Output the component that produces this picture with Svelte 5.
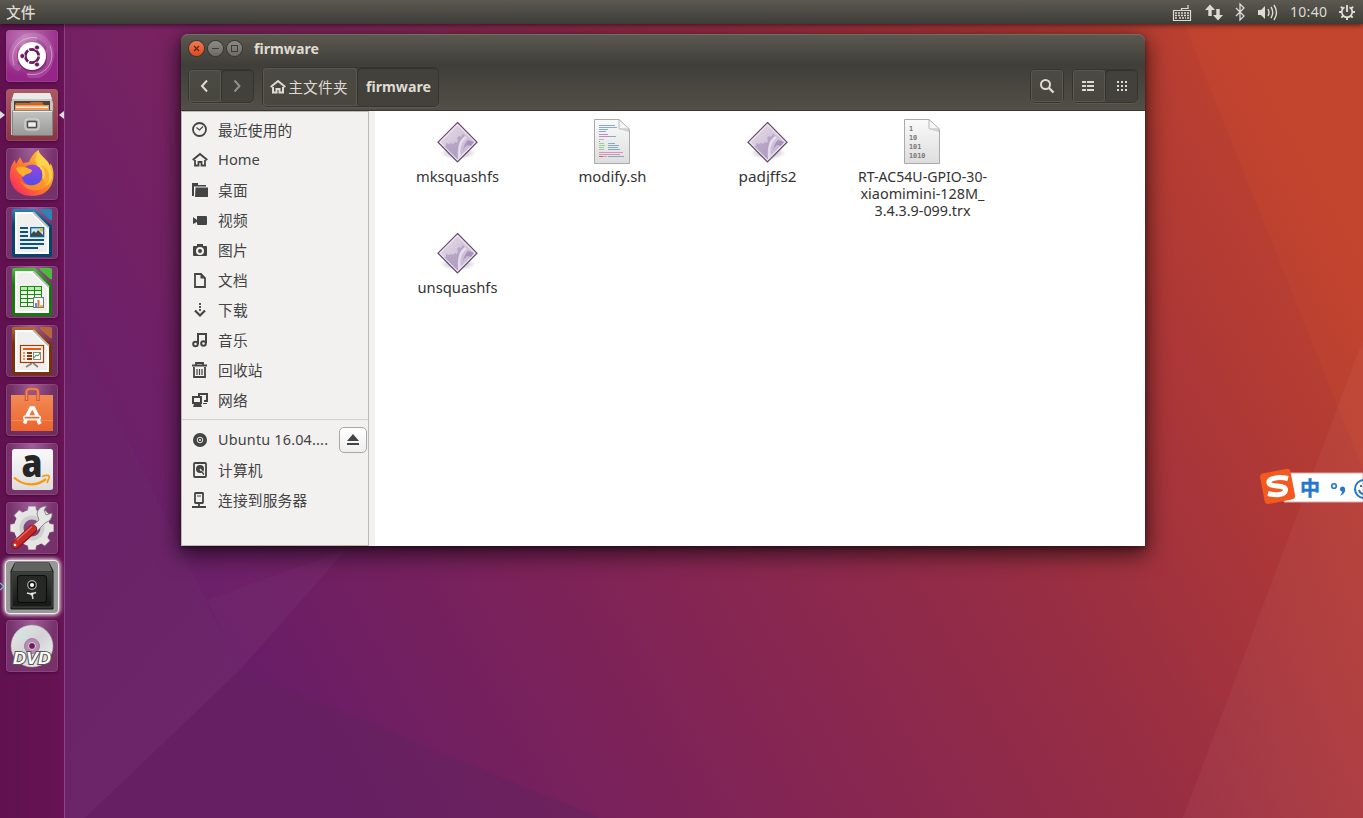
<script>
  const places = [
    ['recent', '最近使用的'], ['home', 'Home'], ['folder', '桌面'], ['video', '视频'],
    ['camera', '图片'], ['doc', '文档'], ['download', '下载'], ['music', '音乐'],
    ['trash', '回收站'], ['network', '网络']
  ];
  const devices = [['disc', 'Ubuntu 16.04....'], ['disk', '计算机'], ['server', '连接到服务器']];
  const files = [
    ['exec', ['mksquashfs'], [83]], ['script', ['modify.sh'], [68]], ['exec', ['padjffs2'], [58]],
    ['binary', ['RT-AC54U-GPIO-30-', 'xiaomimini-128M_', '3.4.3.9-099.trx'], [129, 124, 96]],
    ['exec', ['unsquashfs'], [80]]
  ];
  const apps = ['dash', 'files', 'firefox', 'writer', 'calc', 'impress', 'software', 'amazon', 'settings', 'safe', 'dvd'];
  const teeth = [0, 45, 90, 135, 180, 225, 270, 315];
  const office = {
    writer: ['#2c83b4', '#06446f'], calc: ['#4cbb3a', '#157a0b'], impress: ['#b5673a', '#7d2f06']
  };
  const codeLines = [
    [5, 6, 16, '#7ba3be'], [5, 8, 18, '#7ba3be'], [5, 10, 9, '#7ba3be'], [5, 12, 7, '#7ba3be'],
    [5, 15, 9, '#c17bc5'], [5, 17, 9, '#c77bbb'], [14, 17, 8, '#7ba3be'], [5, 20, 5, '#94c990'], [5, 22, 1, '#888'],
    [5, 24, 5, '#94c990'], [14, 24, 7, '#7ba3be'], [5, 26, 6, '#94c990'], [14, 26, 11, '#7ba3be'],
    [5, 28, 5, '#94c990'], [14, 28, 10, '#7ba3be'], [5, 30, 5, '#94c990'], [14, 30, 12, '#7ba3be'],
    [5, 33, 24, '#d987b8'], [5, 35, 21, '#d987b8'], [5, 37, 4, '#d65060'], [9, 37, 4, '#aaa'], [14, 37, 16, '#7ba3be']
  ];
</script>

{#snippet appIcon(n)}
  <svg width="52" height="52" viewBox="0 0 52 52">
    {#if n === 'dash'}
      <g fill="none" stroke="#fff" stroke-linecap="round">
        <path d="M9 31C4 15 15 5 29 8M43 21C48 35 38 47 24 45M19 7C36 1 48 15 44 31M12 38C0 31 7 14 17 12" stroke-width="6" opacity=".14" />
        <path d="M8 35C2 17 17 5 31 8M44 16C51 33 38 48 21 44" stroke-width="1" opacity=".4" />
      </g>
      <circle cx="26" cy="26.8" r="14.5" fill="#4d0b41" opacity=".45" />
      <circle cx="26" cy="26" r="14" fill="#fff" />
      <circle cx="26" cy="26" r="6.7" fill="none" stroke="#6b1c5c" stroke-width="2.8" />
      <path d="M26 26L34.5 26M26 26L21.5 18M26 26L21.5 34" stroke="#fff" stroke-width="1.2" />
      <circle cx="26" cy="26" r="4.8" fill="#fff" />
      {#each [[31, 17.5], [16.3, 26], [31, 34.5]] as p}
        <circle cx={p[0]} cy={p[1]} r="2.5" fill="#6b1c5c" stroke="#fff" stroke-width=".8" />
      {/each}
    {:else if n === 'files'}
      <path d="M8 4H44L47 14V46H5V14Z" fill="#c7c6c4" />
      <path d="M8 4H44L46 10H6Z" fill="#e9e9e8" />
      <path d="M8 12H44V23H8Z" fill="#48433f" />
      <path d="M9 16L10 14H24L25 13H36L38 16H43V22H9Z" fill="#c7652b" />
      <path d="M9 16H43V22H9Z" fill="#ee9a59" /><path d="M10 17.500H42V19H10Z" fill="#fff0dd" />
      <rect x="6.500" y="21.500" width="40" height="25" rx="1" fill="url(#silver)" stroke="#777" stroke-width=".8" />
      <path d="M7 22.500H46" stroke="#eee" />
      <rect x="19" y="30" width="14" height="11" rx="2.500" fill="#b4b4b4" stroke="#dedede" />
      <rect x="21.500" y="32.500" width="9" height="6" rx="1" fill="#eee" stroke="#4c4c4c" stroke-width="1.400" />
    {:else if n === 'firefox'}
      <path d="M26 48C11 48 2.500 37 4 24C4.600 18 7 14 9 12L10 16L14 9L17 15L23 14C26 7 29 4 32.500 2C33 7 38 9 42 14C43 15.500 43.500 17 44 18L44.500 15C51 26 48 48 26 48Z" fill="url(#fox)" />
      <path d="M29 12C31 7 31 5 32.500 2C33 8 45 12 46 26C46.500 31 44 36 40 38Z" fill="#ffd94d" opacity=".85" />
      <circle cx="26" cy="27" r="10.500" fill="url(#globe)" />
      <path d="M35 17C45 20 46 34 38 40C30 45 18 42 14 33C18 38 29 39 36 33C41 28 39 21 35 17Z" fill="#ff9a2b" opacity=".7" />
      <path d="M10 20C15 17 22 20 26 22C26 26 20 25 17 29C15 27 11 24 10 20Z" fill="#ffb12a" />
    {:else if office[n]}
      <path d="M8 2H29L46 19V48Q46 50 44 50H8Q6 50 6 48V4Q6 2 8 2Z" fill="url(#g-{n})" />
      <path d="M34 2H44Q46 2 46 4V13Q44 14 43 12L34 4Q33 2 34 2Z" fill={office[n][0]} />
      <path d="M9 5H27L43 21V47H9Z" fill="#fff" /><path d="M11 7H26L41 22V45H11Z" fill="#efefee" />
      <path d="M27 5L43 21" stroke="#bbb" stroke-width="2" />
      {#if n === 'writer'}
        <path d="M14 21H22M14 25H22M14 29H22M14 33H38M14 37H38M14 41H32" stroke="#08538c" stroke-width="1.800" />
        <rect x="24.700" y="20.700" width="13" height="9" fill="#cbe5f4" stroke="#08538c" stroke-width="1.200" />
        <path d="M25 29V27L28 24L30 26L32 23L37 28V29Z" fill="#3b4b43" /><circle cx="35.500" cy="23" r="1.800" fill="#e9bd28" />
      {:else if n === 'calc'}
        <path d="M14 20H36V41H14Z" fill="#16900b" />
        {#each [21, 25, 29, 33, 37] as y}{#each [15, 22, 29] as x}<rect {x} {y} width="6" height="3" fill={y === 21 ? '#bce8b1' : '#f5fff2'} />{/each}{/each}
        <rect x="27.500" y="31.500" width="10" height="10" fill="#fff" stroke="#777" />
        <path d="M29 37H31V41H29Z" fill="#3d99db" /><path d="M31.500 34H33.500V41H31.500Z" fill="#e66c32" /><path d="M34 39H37V41H34Z" fill="#f0ba28" />
      {:else}
        <path d="M25 38V39L20 42M27 38L32 42" stroke="#888" stroke-width="1.800" />
        <rect x="14.500" y="20.500" width="23" height="17" fill="#fff4eb" stroke="#a33e0b" stroke-width="1.200" />
        <path d="M17 24H35" stroke="#e15b1d" stroke-width="2" />
        <path d="M17 28H19M17 31H19M17 34H19" stroke="#ed935d" stroke-width="2" /><path d="M21 28H26M21 31H26M21 34H26" stroke="#8c380e" stroke-width="2" />
        <rect x="27.500" y="27.500" width="7" height="7" fill="#fff" stroke="#888" /><path d="M28 33L30 30L32 31L34 28" fill="none" stroke="#2c9328" />
      {/if}
    {:else if n === 'software'}
      <path d="M5 11H47V47H5Z" fill="url(#orange)" /><path d="M5 36H47V37H5Z" fill="#f78a50" />
      <path d="M20.500 17V8Q20.500 5 24 5H29Q32 5 32 8V17" fill="none" stroke="#cf572e" stroke-width="3.600" /><path d="M20.500 16V8Q20.500 5 24 5H29Q32 5 32 8V16" fill="none" stroke="#ef8b61" stroke-width="1.600" />
      <path d="M21 32L25 24H27.500L31.500 32M20 36L18.500 39.500M32 36L34 40" fill="none" stroke="#fff" stroke-width="3.600" />
      <rect x="17.800" y="32" width="16.500" height="3.400" rx="1.700" fill="#ec6932" stroke="#fff" stroke-width="1.600" />
    {:else if n === 'amazon'}
      <rect x="6" y="6" width="41" height="41" rx="2.500" fill="url(#paper)" />
      <text x="15.500" y="34" font-family="Open Sans" font-weight="800" font-size="38" textLength="21" lengthAdjust="spacingAndGlyphs" fill="#252525">a</text>
      <path d="M8 34.500C17 43 31 43.500 40 36" fill="none" stroke="#f79a16" stroke-width="2.300" /><path d="M36 33.500C41 31.500 44 32 43 35L41 40" fill="none" stroke="#f79a16" stroke-width="1.800" />
    {:else if n === 'settings'}
      <g transform="translate(26 26)" fill="#e8e8e7">
        {#each teeth as a}<path d="M-4.500 -16L-3.500 -21.500H3.500L4.500 -16Z" transform="rotate({a})" stroke="#bbb" stroke-width=".5" />{/each}
        <circle r="14" fill="none" stroke="#e5e5e4" stroke-width="8" /><circle r="10.500" fill="none" stroke="#cecece" stroke-width="4" />
      </g>
      <path d="M25 25L33 18L31 12Q32 4 41 4L38 8L40 13L46 11Q47 18 39 21L31 29Z" fill="#e6e6e5" stroke="#777" stroke-width=".8" />
      <path d="M9.500 43L27 27" stroke="#8d1515" stroke-width="8.500" stroke-linecap="round" /><path d="M9.500 42.500L27 26.500" stroke="#c62c29" stroke-width="6.500" stroke-linecap="round" /><path d="M11 38L26 24.500" stroke="#e36c65" stroke-width="1.300" /><circle cx="9" cy="43" r="1.300" fill="#fff" />
    {:else if n === 'safe'}
      <path d="M9 2H43L47 10V48H5V10Z" fill="#282b29" stroke="#151515" /><path d="M9 2H43L46 10H6Z" fill="#62645f" />
      <path d="M6 11H46V46H6Z" fill="url(#safe)" stroke="#444744" />
      <rect x="11.500" y="14.500" width="29" height="27" rx="3" fill="#252926" stroke="#0c0e0c" stroke-width="1.200" />
      <circle cx="26" cy="24" r="4.300" fill="#151515" stroke="#a7a7a4" stroke-width="1.200" /><circle cx="26" cy="24" r="2" fill="#fff" />
      <path d="M21 32L25 33L30 31.500M26 33L27 38" fill="none" stroke="#deded8" stroke-width="1.400" /><circle cx="26" cy="33" r="1.500" fill="#eee" />
    {:else}
      <circle cx="26" cy="26" r="21" fill="url(#disc)" stroke="#aaa" stroke-width=".5" />
      <path d="M26 26L8 15A21 21 0 0 1 18 7Z" fill="#cbe5dd" opacity=".55" /><path d="M26 26L34 46A21 21 0 0 0 44 36Z" fill="#f1d8ac" opacity=".4" />
      <circle cx="26" cy="26" r="7.500" fill="#b48db2" stroke="#a87ca4" /><circle cx="26" cy="26" r="3.500" fill="#701b60" stroke="#ddd" />
      <text x="7" y="43.500" font-family="Liberation Sans" font-size="16.500" font-style="italic" font-weight="700" textLength="38" lengthAdjust="spacingAndGlyphs" fill="#fff" stroke="#555" stroke-width="2" paint-order="stroke">DVD</text>
    {/if}
  </svg>
{/snippet}

{#snippet symbol(n)}
  <svg class="symbol" width="16" height="16" viewBox="0 0 16 16" fill="none" stroke="currentColor" stroke-width="1.800">
    {#if n === 'recent'}<circle cx="7.500" cy="7.500" r="6.500" /><path d="M4.500 5.500L7.500 8L11 4.500" stroke-width="1.100" />
    {:else if n === 'home'}<path d="M.7 8L8 2L15.300 8" stroke-width="2" /><path d="M3 8V13.500H6.500V10H9.500V13.500H13V8" />
    {:else if n === 'folder'}<path d="M0 1H6V3H14V4.500H2V14H0ZM3.500 5.500H16V14.500Q16 15 15 15H3Z" fill="currentColor" stroke="none" />
    {:else if n === 'video'}<path d="M5 4H14Q15 4 15 5V12Q15 13 14 13H6Q5 13 5 12V10L1 12V5L5 8Z" fill="currentColor" stroke="none" />
    {:else if n === 'camera'}<path fill="currentColor" stroke="none" fill-rule="evenodd" d="M5 2H11V4H14Q15 4 15 5V13Q15 14 14 14H2Q1 14 1 13V5Q1 4 2 4H5ZM8 5A4 4 0 1 0 8 13A4 4 0 1 0 8 5ZM8 7A2 2 0 1 1 8 11A2 2 0 1 1 8 7Z" />
    {:else if n === 'doc'}<path d="M3 2H9L13 6V15H3Z" /><path d="M8.500 2L13 6.500H8.500Z" fill="currentColor" stroke="none" />
    {:else if n === 'download'}<path d="M8 1V10" stroke-dasharray="2 1" /><path d="M3 8.500L8 13.500L13 8.500" stroke-width="2.200" />
    {:else if n === 'music'}<path d="M6 12V2H14V11" stroke-width="2" /><circle cx="3.500" cy="12" r="2.300" stroke-width="2" /><circle cx="11.500" cy="11.500" r="2.300" stroke-width="2" />
    {:else if n === 'trash'}<path d="M0 3.500H15M4 3V1H11V3M2 5V15H13V5" /><path d="M5 7V13M7.500 7V13M10 7V13" stroke-width="1.200" />
    {:else if n === 'network'}<path d="M7 4V2H15V9H12M1 5H9V11H1Z" stroke-width="2" /><path d="M2 12L1 15H10L9 12ZM11 11H15V12H11Z" fill="currentColor" stroke="none" />
    {:else if n === 'disc'}<circle cx="8" cy="8" r="7" fill="currentColor" stroke="none" /><circle cx="8" cy="8" r="2.800" stroke="#eee" stroke-width="1" /><circle cx="8" cy="8" r="1" fill="#eee" stroke="none" />
    {:else if n === 'disk'}<rect x="2" y="1" width="12" height="14" rx="1" /><circle cx="8" cy="7" r="4" fill="currentColor" stroke="none" /><path d="M8 7L12 12" stroke="#eee" stroke-width="1.400" /><path d="M9 9L12 12.500" stroke-width="1.300" />
    {:else}<rect x="3" y="1" width="8" height="10" rx=".5" /><path d="M5 4H9" stroke-width="1" /><path d="M7 11V15M0 15H14" />{/if}
  </svg>
{/snippet}

{#snippet fileIcon(n)}
  <svg width="48" height="48" viewBox="0 0 48 48">
    {#if n === 'exec'}
      <ellipse cx="25" cy="35" rx="18" ry="6.500" fill="url(#shadow)" />
      <path d="M24.500 4.500L44 24.200L24.500 44L5 24.200Z" fill="url(#exec)" stroke="#65466f" stroke-width="1.200" />
      <path d="M24.500 6.500L42 24.200L24.500 42L7 24.200Z" fill="none" stroke="#eee5ef" stroke-width="1.100" />
      <path d="M11 28L13 28V25L16 26L18 25L20 26L22 24L24 25L25 22L24 20L26 18L28 19L30 16L32 18L30 20L27 24L26 30L25 41L24 41Z" fill="#9a84ad" opacity=".5" />
      <path d="M30 33Q31 26 35 22L41 24L38 28L34 27Q31 29 30 33Z" fill="#8f78a6" opacity=".6" />
      <path d="M28 37C26 31 29 23 34 20L32 18C26 22 24 29 25 41Z" fill="#eee7f2" opacity=".75" />
    {:else}
      <path d="M6.500 1.500H31L41.500 12V45.500H6.500Z" fill="url(#paper)" stroke="#aaa" />
      <path d="M31 1.500V10Q31 11 32 11H41.500Z" fill="#f6f6f5" stroke="#b7b7b7" /><path d="M31 11L41 14V12Z" fill="#ccc" />
      {#if n === 'script'}
        <g transform="translate(6 1)">{#each codeLines as [x, y, w, fill]}<rect {x} {y} width={w} height=".9" {fill} />{/each}</g>
      {:else}
        <g fill="#777" font-family="DejaVu Sans Mono" font-weight="700" font-size="6.800"><text x="11" y="12.500">1</text><text x="11" y="21.500">10</text><text x="11" y="30.500">101</text><text x="11" y="39.500">1010</text></g>
      {/if}
    {/if}
  </svg>
{/snippet}

<div class="screen">
  <svg class="defs" width="0" height="0"><defs>
    <linearGradient id="silver" x2="0" y2="1"><stop stop-color="#c4c4c3" /><stop offset="1" stop-color="#999997" /></linearGradient>
    <linearGradient id="orange" x2="0" y2="1"><stop stop-color="#f18a55" /><stop offset="1" stop-color="#ed642c" /></linearGradient>
    <linearGradient id="paper" x2="0" y2="1"><stop stop-color="#fafafa" /><stop offset="1" stop-color="#ddd" /></linearGradient>
    <linearGradient id="safe" x2="0" y2="1"><stop stop-color="#3b403d" /><stop offset="1" stop-color="#151815" /></linearGradient>
    <linearGradient id="fox" x1="1" x2="0" y2="1"><stop stop-color="#ffe14c" /><stop offset=".45" stop-color="#ff8a24" /><stop offset="1" stop-color="#f51669" /></linearGradient>
    <linearGradient id="globe" x2="0" y2="1"><stop stop-color="#9b45dc" /><stop offset="1" stop-color="#504ee6" /></linearGradient>
    <linearGradient id="disc" x2="1" y2="1"><stop stop-color="#e9e9e9" /><stop offset=".5" stop-color="#d2d1d5" /><stop offset="1" stop-color="#f5f5f5" /></linearGradient>
    <linearGradient id="exec" x2="1" y2="1"><stop stop-color="#e7dfe8" /><stop offset="1" stop-color="#bdabcc" /></linearGradient>
    <radialGradient id="shadow"><stop stop-color="#000" stop-opacity=".35" /><stop offset="1" stop-color="#000" stop-opacity="0" /></radialGradient>
    {#each Object.entries(office) as [k, c]}<linearGradient id="g-{k}" x2="0" y2="1"><stop stop-color={c[0]} /><stop offset=".35" stop-color={c[1]} /><stop offset="1" stop-color={c[1]} /></linearGradient>{/each}
  </defs></svg>

  <svg class="wallpaper" width="1363" height="818" viewBox="0 0 1363 818">
    <defs>
      <linearGradient id="wall" gradientUnits="userSpaceOnUse" x1="210" y1="590" x2="1250" y2="10"><stop stop-color="#691d67" /><stop offset=".28" stop-color="#7f2357" /><stop offset=".6" stop-color="#962d44" /><stop offset=".82" stop-color="#ae3836" /><stop offset="1" stop-color="#c0432e" /></linearGradient>
      <linearGradient id="facet" x2="1" y2="1"><stop stop-color="#fff" stop-opacity="0" /><stop offset="1" stop-color="#f1a0a0" stop-opacity=".09" /></linearGradient>
      <linearGradient id="left-facet" x2=".4" y2="1"><stop stop-color="#70306e" stop-opacity=".2" /><stop offset="1" stop-color="#70306a" stop-opacity=".45" /></linearGradient>
    </defs>
    <path fill="url(#wall)" d="M0 0H1363V818H0Z" />
    <path d="M65 24H450L346 550L240 670L65 310Z" fill="#7e3277" opacity=".17" />
    <path d="M65 310L240 670L85 818H65Z" fill="url(#left-facet)" />
    <path d="M240 670L600 818H85Z" fill="#60245c" opacity=".42" />
    <path d="M346 550L240 670L207 600Z" fill="#fff" opacity=".018" />
    <path d="M1184 24H1363V470Z" fill="#e65a2a" opacity=".12" />
    <path d="M1363 340V818H1183Z" fill="url(#facet)" />
  </svg>

  <header class="panel">
    <span class="menu-title">文件</span>
    <div class="indicators">
      <svg width="156" height="24" viewBox="1172 0 156 24" fill="none" stroke="#dfdbd2">
        <path d="M1181.500 10V8.500H1188V5M1173.500 10.500H1190.500V20.500H1173.500Z" stroke-width="1.200" />
        <path d="M1175 13H1189M1175 15.500H1189M1175 18H1177M1179 18H1186M1187 18H1189" stroke-width="1.500" stroke-dasharray="2 1" />
        <path d="M1205 10L1210 4.500L1215 10H1211.700V16H1208.300V10ZM1213 15H1216.300V9H1219.700V15H1223L1218 20.500L1213 15Z" fill="#dfdbd2" stroke="none" />
        <path d="M1236 8L1244 16L1240 20V4L1244 8L1236 16" stroke-width="1.300" />
        <path d="M1258 10H1261L1265 6V19L1261 15H1258Z" fill="#dfdbd2" stroke="none" /><path d="M1268 9Q1270 12.500 1268 16M1271 7Q1274.500 12.500 1271 18M1274 5Q1279 12.500 1274 20" stroke-width="1.400" />
        <text x="1290" y="17" fill="#dfdbd2" stroke="none" font-size="14" textLength="37">10:40</text>
      </svg>
      <svg width="18" height="18" viewBox="-9 -9 18 18" fill="none" stroke="#dfdbd2">
        <path d="M-2.500 -4.700A5.300 5.300 0 1 0 2.500 -4.700" stroke-width="1.800" /><path d="M0 -7V0" stroke-width="1.900" />
        {#each [50, 90, 135, 180, 225, 270, 310] as a}<path d="M0 -5V-8" stroke-width="2" transform="rotate({a})" />{/each}
      </svg>
    </div>
  </header>

  <div class="desktop">
    <nav class="launcher">
      {#each apps as app}
        <div class="tile {app}">
          {#if app === 'files'}<i class="mark left"></i><i class="mark right"></i>{/if}
          {#if app === 'safe'}<svg class="outline-mark" width="5" height="9" viewBox="0 0 5 9"><path d="M0 1L4 4.500L0 8" fill="none" stroke="#79bad5" stroke-width="1.300" /></svg>{/if}
          {@render appIcon(app)}
        </div>
      {/each}
    </nav>

    <section class="window">
      <div class="titlebar">
        <span class="control close"><svg width="15" height="15" viewBox="0 0 15 15"><path d="M5 5L10 10M10 5L5 10" stroke="#5d2515" stroke-width="1.200" /></svg></span>
        <span class="control"><svg width="15" height="15" viewBox="0 0 15 15"><path d="M4 7.500H11" stroke="#3d3c37" /></svg></span>
        <span class="control"><svg width="15" height="15" viewBox="0 0 15 15"><rect x="4.500" y="4.500" width="6" height="6" fill="none" stroke="#3d3c37" /></svg></span>
        <svg class="heading" width="70" height="22"><text x="0" y="16" textLength="65" lengthAdjust="spacingAndGlyphs">firmware</text></svg>
      </div>
      <div class="toolbar">
        <div class="group nav">
          <button><svg width="16" height="16" viewBox="0 0 16 16"><path d="M10 2.500L5 8L10 13.500" /></svg></button>
          <button class="pressed dim"><svg width="16" height="16" viewBox="0 0 16 16"><path d="M5.500 2.500L10.500 8L5.500 13.500" /></svg></button>
        </div>
        <div class="group path">
          <button class="crumb-home">{@render symbol('home')}<span>主文件夹</span></button>
          <button class="pressed crumb"><svg width="66" height="22"><text x="1" y="16" textLength="65" lengthAdjust="spacingAndGlyphs">firmware</text></svg></button>
        </div>
        <div class="group search"><button><svg width="16" height="16" viewBox="0 0 16 16"><circle cx="6.500" cy="6.500" r="4.500" /><path d="M10 10L14.500 14.500" stroke-width="2.400" /></svg></button></div>
        <div class="group views">
          <button><svg width="14" height="14" viewBox="0 0 14 14"><path d="M0 3H4M5 3H12M0 7H4M5 7H12M0 11H4M5 11H12" /></svg></button>
          <button class="pressed"><svg width="14" height="14" viewBox="0 0 14 14"><path d="M3 3H13M3 7H13M3 11H13" stroke-dasharray="2 2" /></svg></button>
        </div>
      </div>
      <div class="content">
        <aside>
          {#each places as [icon, label]}<div class="place" class:latin={icon === 'home'}>{@render symbol(icon)}<span>{label}</span></div>{/each}
          <hr />
          {#each devices as [icon, label]}
            <div class="place">{@render symbol(icon)}
              {#if icon === 'disc'}<svg width="115" height="24"><text x="0" y="17" textLength="110">{label}</text></svg><button class="eject"><svg width="14" height="14" viewBox="0 0 14 14"><path d="M7 1L13 8H1ZM1 10H13V12H1Z" fill="#444" /></svg></button>{:else}<span>{label}</span>{/if}
            </div>
          {/each}
        </aside>
        <main>
          {#each files as [icon, lines, widths]}
            <div class="file">
              {@render fileIcon(icon)}
              <svg class="filename" width="150" height={17 * lines.length + 4}>
                {#each lines as line, i}<text x={(151 - widths[i]) / 2} y={14 + 17 * i} textLength={widths[i]} lengthAdjust="spacingAndGlyphs">{line}</text>{/each}
              </svg>
            </div>
          {/each}
        </main>
      </div>
    </section>
  </div>

  <div class="ime">
    <svg width="104" height="36" viewBox="0 0 104 36">
      <path d="M30 5H104V34H25Z" fill="#fff" stroke="#e4a5a5" />
      <rect x="3" y="3" width="31" height="31" rx="4" fill="#f25a1f" transform="rotate(-11 18 18)" />
      <path d="M29 10.500C18 8 9 11 10 15C11 19.500 27 16.500 26.500 22C26 27.500 16 27.500 9 25.500" fill="none" stroke="#fff" stroke-width="5" />
      <text x="41" y="27.500" font-family="Noto Sans CJK SC" font-size="20" font-weight="700" fill="#2477cb" stroke="#2477cb" stroke-width=".4">中</text>
      <circle cx="75" cy="18" r="2.300" fill="none" stroke="#2477cb" stroke-width="1.600" /><circle cx="83.500" cy="21" r="2.500" fill="#2477cb" /><path d="M86 20.500Q87 25 81 28Q84 24 83 21Z" fill="#2477cb" />
      <circle cx="105" cy="21" r="9" fill="none" stroke="#2477cb" stroke-width="2" /><path d="M102 17V19M100 22Q101 26 105 26" stroke="#2477cb" stroke-width="2" fill="none" />
    </svg>
  </div>
</div>

<style>
  :global(body) { overflow: hidden; }
  .screen { position: relative; width: 1363px; height: 818px; overflow: hidden; display: flex; flex-direction: column; font-family: "Noto Sans", "Noto Sans CJK SC", sans-serif; font-size: 14.700px; color: #3c3c3c; }
  svg { display: block; flex: none; overflow: visible; }
  .defs, .wallpaper { position: absolute; left: 0; top: 0; }
  .panel { position: relative; z-index: 1; box-sizing: border-box; height: 24px; display: flex; align-items: center; justify-content: space-between; padding: 0 7px 0 6px; background: linear-gradient(#5b5950, #3d3c38); box-shadow: 0 1px 5px #0009; color: #dfdbd2; }
  .menu-title { font: 500 14.700px/24px "Noto Sans CJK SC", sans-serif; }
  .indicators { display: flex; align-items: center; gap: 10px; }
  .desktop { position: relative; flex: 1; display: flex; }
  .launcher { box-sizing: border-box; width: 65px; padding: 6px 6px; display: flex; flex-direction: column; gap: 7px; background: linear-gradient(90deg, #61114f, #671355); border-right: 1px solid #8b4580; }
  .tile { position: relative; width: 52px; height: 52px; border-radius: 4px; background: radial-gradient(ellipse at 50% 0, #b477b4aa, #833b7940 60%, transparent), #743068; box-shadow: inset 0 0 0 1px #a5639966, 0 1px 3px #2b042588; }
  .dash { background: radial-gradient(circle at 35% 15%, #bd75b5, #952586 70%); }
  .files { background: linear-gradient(#ad5962, #873542); }
  .software, .impress { background-color: #6c2c5d; }
  .safe { background: #979996; box-shadow: 0 0 0 1px #eee, 0 0 4px 2px #fff; }
  .mark { position: absolute; top: 22px; width: 0; height: 0; border: 4px solid transparent; }
  .left { left: -6px; border-left: 5px solid #ddd; border-right: 0; }
  .right { right: -6px; border-right: 5px solid #ddd; border-left: 0; }
  .outline-mark { position: absolute; left: -6px; top: 21px; }
  .window { position: absolute; left: 181px; top: 10px; width: 964px; height: 512px; display: flex; flex-direction: column; border-radius: 7px 7px 0 0; box-shadow: 0 7px 22px 2px #0009, 0 2px 5px #0006; }
  .titlebar { box-sizing: border-box; height: 30px; padding: 0 8px; display: flex; align-items: center; gap: 4px; border-radius: 7px 7px 0 0; background: linear-gradient(#5b5950, #403f3a); box-shadow: inset 0 1px #706e63; }
  .control { box-sizing: border-box; width: 15px; height: 15px; display: grid; place-items: center; border-radius: 50%; background: linear-gradient(#8c8a81, #6d6b64); box-shadow: 0 0 0 1px #383732; margin-top: -1px; }
  .close { background: linear-gradient(#f47a51, #df4820); }
  .heading { margin-left: 8px; margin-top: -1px; }
  .heading text, .crumb text { fill: #dfdbd2; font-weight: 700; font-size: 14.300px; }
  .toolbar { box-sizing: border-box; height: 47px; padding: 0 7px; display: flex; align-items: center; border-bottom: 1px solid #393832; background: linear-gradient(#3f3e39, #514f47); color: #dfdbd2; }
  .group { box-sizing: border-box; height: 34px; margin-top: -2px; display: flex; border: 1px solid #35342f; border-radius: 5px; box-shadow: 0 1px #5c5a51; }
  .group button { flex: 1; display: flex; align-items: center; justify-content: center; padding: 0; border: 0; color: inherit; background: linear-gradient(#4b4a44, #48463f); font: inherit; border-radius: 4px; box-shadow: inset 0 0 0 1px #59574e; }
  .group .pressed { background: #42413b; box-shadow: inset 1px 1px 1px #34332e; }
  .group svg { stroke: #dfdbd2; stroke-width: 2; fill: none; }
  .group text { stroke: none; }
  .group .dim svg { stroke: #929087; }
  .nav { width: 66px; }
  .path { width: 177px; height: 40px; margin-left: 8px; margin-top: 0; }
  .path .crumb-home { flex: 0 0 94px; gap: 2px; padding-right: 2px; }
  .crumb-home span { font-size: 14.700px; letter-spacing: .2px; margin-top: -1px; }
  .crumb svg { margin-left: 1px; }
  .search { width: 34px; margin-left: auto; margin-right: 8px; }
  .views { width: 66px; }
  .content { flex: 1; display: flex; background: #fff; }
  aside { box-sizing: border-box; width: 188px; padding-top: 3px; background: #f2f1f0; border: 1px solid #bcb8b2; }
  .place { height: 30px; display: flex; align-items: center; gap: 10px; padding-left: 10px; color: #444; }
  .place span { letter-spacing: .2px; line-height: 24px; }
  .place.latin span { margin-top: -3px; letter-spacing: 0; }
  .place text { fill: #444; font-size: 14.400px; }
  .symbol { color: #444; }
  .crumb-home .symbol { color: #dfdbd2; }
  hr { height: 1px; border: 0; margin: 4px 0 5px; background: #d3d0cc; }
  .eject { box-sizing: border-box; width: 28px; height: 26px; margin-left: -4px; padding: 0; border: 1px solid #aaa7a2; border-radius: 5px; background: linear-gradient(#fff, #eee); display: grid; place-items: center; }
  main { flex: 1; display: grid; grid-template-columns: repeat(4, 155px); grid-template-rows: 111px 111px; padding: 7px 0 0 4px; margin-left: 6px; box-shadow: -6px 0 #f2f1f0; align-content: start; }
  .file { display: flex; flex-direction: column; align-items: center; gap: 2px; }
  .filename { font-size: 14.500px; fill: #333; }
  .ime { position: absolute; left: 1259px; top: 468px; }
</style>
